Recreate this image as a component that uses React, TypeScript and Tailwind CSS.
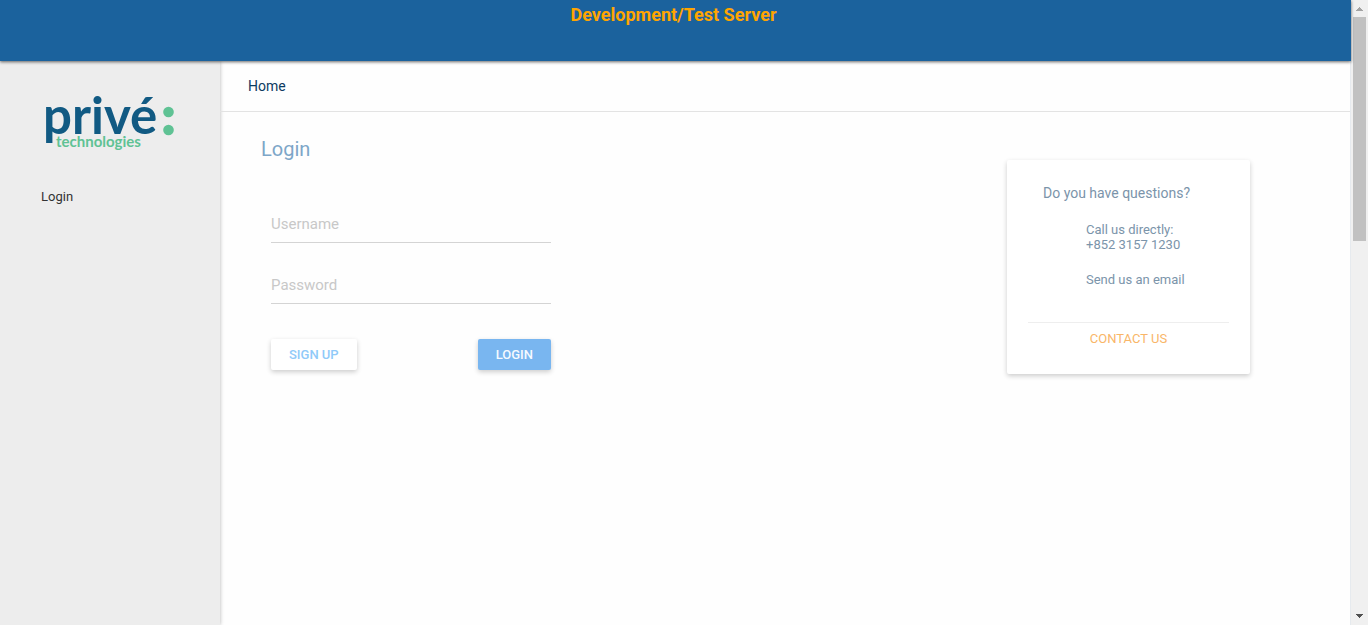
function Logo() {
  return (
    <svg viewBox="0 0 132 80" className="h-20 w-[132px]" role="img" aria-label="privé: technologies">
      <text x="-2" y="53" fill="#115a83" fontSize="51" fontWeight="700" fontFamily="Lato, sans-serif">
        privé
      </text>
      <text x="11" y="66" fill="#5fc294" fontSize="15" fontWeight="700" fontFamily="Lato, sans-serif">
        technologies
      </text>
      <circle cx="123.500" cy="31" r="5.3" fill="#5fc294" />
      <circle cx="123.500" cy="49" r="5.3" fill="#5fc294" />
    </svg>
  );
}

function Field({ id, label, type }: { id: string; label: string; type: string }) {
  return (
    <div className="grid items-center border-b border-[#d4d4d4]">
      <input
        id={id}
        type={type}
        placeholder=" "
        className="peer col-start-1 row-start-1 h-9 w-full bg-transparent text-[15px] text-[#444] outline-none"
      />
      <label
        htmlFor={id}
        className="invisible col-start-1 row-start-1 cursor-text text-[15px] leading-5 text-[#c8c8c8] peer-placeholder-shown:visible"
      >
        {label}
      </label>
    </div>
  );
}

function Scrollbar() {
  return (
    <div className="flex w-[17px] shrink-0 flex-col items-center bg-[#f0f0f0]" aria-hidden="true">
      <svg viewBox="0 0 17 17" className="h-[17px] w-[17px]">
        <path d="M8 7h1v1h1v1h1v1h1v1H5v-1h1V9h1V8h1z" fill="#a3a3a3" />
      </svg>
      <div className="h-56 w-[13px] bg-[#c1c1c1]" />
      <svg viewBox="0 0 17 17" className="mt-auto h-[17px] w-[17px]">
        <path d="M5 6h7v1h-1v1h-1v1H9v1H8V9H7V8H6V7H5z" fill="#505050" />
      </svg>
    </div>
  );
}

export default function App() {
  return (
    <div className="flex min-h-screen bg-[#fefefe] font-[Roboto,sans-serif]">
      <div className="flex min-w-0 flex-1 flex-col">
        <header className="z-10 h-[61px] bg-[#1b629d] pt-1 pr-1 text-center text-lg leading-[22px] font-bold text-[#ffa500] shadow-[0_1px_3px_rgba(0,0,0,0.6)]">
          Development/Test Server
        </header>
        <div className="flex flex-1">
          <aside className="w-[220px] shrink-0 bg-[#ededed] shadow-[0_0_4px_rgba(0,0,0,0.3)]">
            <div className="pt-5 pl-[45px]">
              <Logo />
            </div>
            <nav className="flex pt-[26px] pl-[41px]">
              <a href="#login" className="text-[13px] leading-5 text-[#333]">
                Login
              </a>
            </nav>
          </aside>
          <main className="min-w-0 flex-1 border-r border-[#e6eaee]">
            <nav className="flex h-[51px] items-center border-b border-[#e3e3e3] pl-7" aria-label="Breadcrumb">
              <a href="#home" className="text-sm text-[#0c3a61]">
                Home
              </a>
            </nav>
            <div className="flex justify-between pr-[100px] pl-[41px]">
              <section>
                <h1 className="pt-[23px] text-xl leading-7 text-[#7da6c8]">Login</h1>
                <form className="mt-[43px] ml-2.5 flex w-[280px] flex-col gap-6">
                  <Field id="username" label="Username" type="text" />
                  <Field id="password" label="Password" type="password" />
                  <div className="flex justify-between pt-[11px]">
                    <button
                      type="button"
                      className="h-[31px] rounded-xs bg-white px-[18px] text-[13px] font-medium text-[#90caf9] shadow-[0_2px_5px_rgba(0,0,0,0.2)]"
                    >
                      SIGN UP
                    </button>
                    <button
                      type="submit"
                      className="h-[31px] rounded-xs bg-[#79b6f0] px-[18px] text-[13px] font-medium text-[#f5faff] shadow-[0_2px_5px_rgba(0,0,0,0.2)]"
                    >
                      LOGIN
                    </button>
                  </div>
                </form>
              </section>
              <section className="mt-12 h-[214px] w-[243px] rounded-xs bg-white px-[21px] pt-[23px] text-[13px] leading-[15px] text-[#7b94aa] shadow-[0_2px_5px_rgba(0,0,0,0.2)]">
                <h2 className="pl-[15px] text-sm leading-5">Do you have questions?</h2>
                <div className="mt-[19px] pl-[58px]">
                  <p>Call us directly:</p>
                  <p>+852 3157 1230</p>
                  <p className="mt-5">
                    <a href="#email">Send us an email</a>
                  </p>
                </div>
                <div className="mt-[35px] border-t border-[#eeeeee] pt-2 text-center">
                  <a href="#contact" className="text-[#f9b668]">
                    CONTACT US
                  </a>
                </div>
              </section>
            </div>
          </main>
        </div>
      </div>
      <Scrollbar />
    </div>
  );
}
